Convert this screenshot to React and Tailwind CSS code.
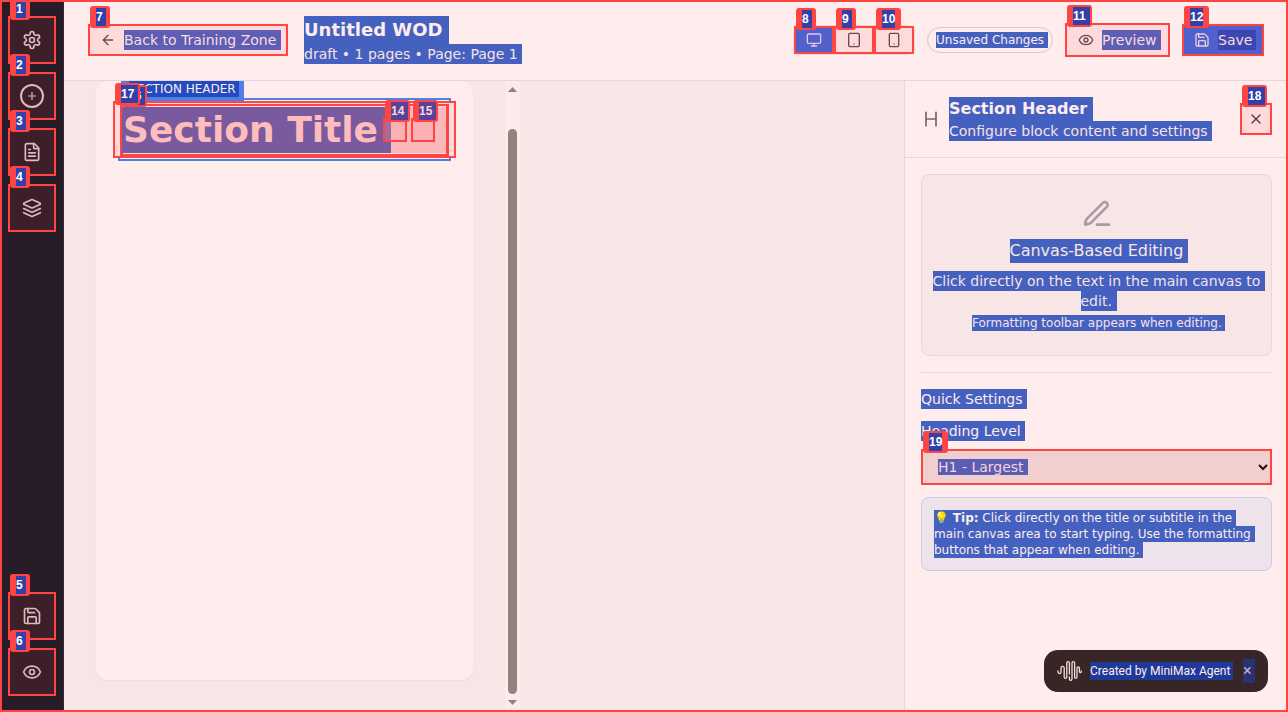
import React from "react";
import { FileText, Save, Eye, ArrowLeft, Monitor, Tablet, Smartphone, X, Heading } from "lucide-react";
import { twMerge } from "tailwind-merge";

// Text shown in its selected state
function Sel({ className = "", children }) {
  return (
    <span className={twMerge("block shrink-0 whitespace-nowrap bg-[#4461c0] text-[#ffecec]", className)}>{children}</span>
  );
}

// Numbered marker at the top left of an interactive element
function Mark({ n, wide = false, pos = "-top-5 left-0", faded = false }) {
  const two = String(n).length === 2;
  return (
    <span
      className={
        "absolute z-20 flex h-[22px] rounded-[3px] bg-[#ff4444] pt-0.5 text-left font-['Liberation_Sans',sans-serif] text-[12px] font-bold leading-[18px] " +
        (two ? "w-[25px] pl-1.5 " : "w-5 pl-1.5 ") + pos
      }
    >
      <span
        className={
          "block h-[18px] " +
          (faded ? "bg-[#59429a] text-[#ffd5d8] " : "bg-[#3340a8] text-white ") +
          (two ? (wide ? "w-[17px]" : "w-[13px]") : "w-[10px]")
        }
      >
        {n}
      </span>
    </span>
  );
}

function Stroke({ size, className = "", children }) {
  return (
    <svg width={size} height={size} viewBox="0 0 24 24" fill="none" stroke="currentColor" strokeWidth="2" strokeLinecap="round" strokeLinejoin="round" className={className}>
      {children}
    </svg>
  );
}

function GearIcon() {
  return (
    <Stroke size={20}>
      <path d="M12.22 2h-.44a2 2 0 0 0-2 2v.18a2 2 0 0 1-1 1.73l-.43.25a2 2 0 0 1-2 0l-.15-.08a2 2 0 0 0-2.73.73l-.22.38a2 2 0 0 0 .73 2.73l.15.1a2 2 0 0 1 1 1.72v.51a2 2 0 0 1-1 1.74l-.15.09a2 2 0 0 0-.73 2.73l.22.38a2 2 0 0 0 2.73.73l.15-.08a2 2 0 0 1 2 0l.43.25a2 2 0 0 1 1 1.73V20a2 2 0 0 0 2 2h.44a2 2 0 0 0 2-2v-.18a2 2 0 0 1 1-1.73l.43-.25a2 2 0 0 1 2 0l.15.08a2 2 0 0 0 2.73-.73l.22-.39a2 2 0 0 0-.73-2.73l-.15-.08a2 2 0 0 1-1-1.74v-.5a2 2 0 0 1 1-1.74l.15-.09a2 2 0 0 0 .73-2.73l-.22-.38a2 2 0 0 0-2.73-.73l-.15.08a2 2 0 0 1-2 0l-.43-.25a2 2 0 0 1-1-1.73V4a2 2 0 0 0-2-2z" />
      <circle cx="12" cy="12" r="3" />
    </Stroke>
  );
}

function LayersIcon() {
  return (
    <Stroke size={20}>
      <path d="m12.83 2.18a2 2 0 0 0-1.66 0L2.6 6.08a1 1 0 0 0 0 1.83l8.58 3.91a2 2 0 0 0 1.66 0l8.58-3.9a1 1 0 0 0 0-1.83Z" />
      <path d="m22 17.65-9.17 4.16a2 2 0 0 1-1.66 0L2 17.65" />
      <path d="m22 12.65-9.17 4.16a2 2 0 0 1-1.66 0L2 12.65" />
    </Stroke>
  );
}

function PenIcon() {
  return (
    <Stroke size={32} className="shrink-0 text-[#a99aa6]">
      <path d="M12 20h9" />
      <path d="M16.376 3.622a1 1 0 0 1 3.002 3.002L7.368 18.635a2 2 0 0 1-.855.506l-2.872.838a.5.5 0 0 1-.62-.62l.838-2.872a2 2 0 0 1 .506-.854z" />
    </Stroke>
  );
}

function Side({ n, children }) {
  return (
    <button className="relative flex h-12 w-12 items-center justify-center border-2 border-[#ff4444] bg-[#3d1f29] text-[#deb9be]">
      <Mark n={n} />
      {children}
    </button>
  );
}

function Sidebar() {
  return (
    <aside className="flex w-16 shrink-0 flex-col justify-between border-r border-[#342932] bg-[#281c28] py-4 pl-2">
      <div className="flex flex-col gap-2">
        <Side n={1}><GearIcon /></Side>
        <Side n={2}>
          <svg width="24" height="24" viewBox="0 0 24 24" fill="none" stroke="currentColor">
            <circle cx="12" cy="12" r="11" strokeWidth="2" />
            <path d="M12 8v8M8 12h8" strokeWidth="1.2" />
          </svg>
        </Side>
        <Side n={3}><FileText size={20} /></Side>
        <Side n={4}><LayersIcon /></Side>
      </div>
      <div className="flex flex-col gap-2">
        <Side n={5}><Save size={20} /></Side>
        <Side n={6}><Eye size={20} /></Side>
      </div>
    </aside>
  );
}

function Header() {
  return (
    <header className="flex h-[81px] shrink-0 items-center border-b border-[#e9d6dc] pl-6 pr-6 text-sm">
      <button className="relative flex h-8 w-[200px] items-center border-2 border-[#ff4444] bg-[#ffdada] pl-2.5 text-[#6a4650]">
        <Mark n={7} />
        <ArrowLeft size={16} />
        <Sel className="ml-2 h-5 w-[157px] bg-[#5c5fb5] text-left leading-5 text-[#ffdada]">Back to Training Zone</Sel>
      </button>
      <div className="ml-4">
        <Sel className="h-7 w-[145px] text-lg font-bold leading-7">Untitled WOD</Sel>
        <Sel className="h-5 w-[218px] leading-5 text-[#f8e0e6]">draft • 1 pages • Page: Page 1</Sel>
      </div>
      <div className="ml-auto flex items-center">
        <div className="flex rounded-md text-[#6a4650] shadow-[0_0_0_1px_#e9d6dc]">
          <button className="relative flex h-7 w-10 items-center justify-center border-2 border-[#ff4444] bg-[#5060cc] text-[#e7c4dc]">
            <Mark n={8} /><Monitor size={16} />
          </button>
          <button className="relative flex h-7 w-10 items-center justify-center border-2 border-[#ff4444] bg-[#ffdada]">
            <Mark n={9} /><Tablet size={16} />
          </button>
          <button className="relative flex h-7 w-10 items-center justify-center border-2 border-[#ff4444] bg-[#ffdada]">
            <Mark n={10} /><Smartphone size={16} />
          </button>
        </div>
        <div className="ml-[13px] flex h-[26px] w-[126px] items-center rounded-full border border-[#dcc6cc] pl-2">
          <Sel className="h-4 w-[112px] text-xs leading-4">Unsaved Changes</Sel>
        </div>
        <button className="relative ml-3 flex h-[34px] w-[105px] items-center border-2 border-[#ff4444] bg-[#ffdada] pl-[11px] text-[#6a4650]">
          <Mark n={11} wide />
          <Eye size={16} />
          <Sel className="ml-2 h-5 w-[59px] bg-[#5c5fb5] text-left leading-5 text-[#ffdada]">Preview</Sel>
        </button>
        <button className="relative ml-3 flex h-8 w-[82px] items-center border-2 border-[#ff4444] bg-[#5060cc] pl-2.5 text-[#f0cbdc]">
          <Mark n={12} />
          <Save size={16} />
          <Sel className="ml-2 h-5 w-[38px] bg-[#3a47b0] text-left leading-5 text-[#ffdada]">Save</Sel>
        </button>
      </div>
    </header>
  );
}

function Canvas() {
  return (
    <main className="flex w-[840px] shrink-0 overflow-hidden bg-[#f8e6e6] pl-8">
      <div className="h-[599px] w-[377px] shrink-0 rounded-xl bg-[#ffecec] pl-[22px] pt-[17px] shadow-[0_1px_2px_#efd9dc]">
        <div className="relative h-[63px] w-[333px] border-2 border-[#4f7ee6]">
          <div className="absolute -top-[23px] left-px h-6 w-[123px] rounded-tr bg-[#4f7ee6] pl-2 pt-1">
            <Sel className="h-4 w-[110px] bg-[#234abf] text-xs leading-4">SECTION HEADER</Sel>
          </div>
          <div className="absolute -left-[7px] top-px h-[57px] w-[343px] border-2 border-[#ff4444] bg-[#ffdada]">
            <div className="ml-[5px] mt-px h-[52px] w-[329px] border-2 border-l-[3px] border-r-[3px] border-[#ff4444] bg-[#fbb8bb]">
              <div className="h-full border-y border-[#ffdada]">
                <Sel className="-ml-px h-[46px] w-[269px] bg-[#7a5a9e] pl-px text-4xl font-bold leading-[46px] text-[#ffbcbc]">Section Title</Sel>
              </div>
            </div>
            <div className="absolute left-[268px] top-[15px] flex gap-1">
              <div className="relative h-6 w-6 border-2 border-[#ff4444] bg-[#ff9ea44d]"><Mark n={14} wide faded pos="-top-5 left-0" /></div>
              <div className="relative h-6 w-6 border-2 border-[#ff4444] bg-[#ff9ea44d]"><Mark n={15} wide faded pos="-top-5 left-0" /></div>
            </div>
            <Mark n={16} wide pos="-top-[18px] left-[7px]" />
            <Mark n={17} wide pos="-top-5 left-0" />
          </div>
        </div>
      </div>
      <div className="ml-8 flex w-[15px] flex-col items-center bg-[#fcebeb] pb-[7px] pt-1.5">
        <svg width="9" height="5" viewBox="0 0 9 5" fill="#948281"><path d="M0 5L4.5 0L9 5z" /></svg>
        <div className="my-auto h-[565px] w-[9px] translate-y-[15px] rounded-full bg-[#948281]" />
        <svg width="9" height="5" viewBox="0 0 9 5" fill="#948281"><path d="M0 0L4.5 5L9 0z" /></svg>
      </div>
    </main>
  );
}

function Panel() {
  return (
    <section className="flex-1 border-l border-[#e9d6dc] text-sm">
      <div className="flex h-[77px] items-center border-b border-[#e9d6dc] pl-4 pr-4">
        <Heading size={20} strokeWidth={2} className="text-[#76656c]" />
        <div className="ml-2">
          <Sel className="h-6 w-[144px] text-base font-bold leading-6">Section Header</Sel>
          <Sel className="h-5 w-[263px] leading-5 text-[#f8e0e6]">Configure block content and settings</Sel>
        </div>
        <button className="relative ml-auto flex h-8 w-8 items-center justify-center border-2 border-[#ff4444] bg-[#ffdada] text-[#5e3c48]">
          <Mark n={18} wide />
          <X size={16} />
        </button>
      </div>
      <div className="px-4 pt-4">
        <div className="flex h-[182px] flex-col items-center rounded-lg border border-[#e9d6dc] bg-[#f8e6e6] pt-[23px]">
          <PenIcon />
          <Sel className="ml-1 mt-[9px] h-6 w-[178px] text-base leading-6 text-[#f8e6e6]">Canvas-Based Editing</Sel>
          <Sel className="ml-1 mt-2 h-5 w-[332px] leading-5 text-[#f8e0e6]">Click directly on the text in the main canvas to</Sel>
          <Sel className="ml-1 h-5 w-9 leading-5 text-[#f8e0e6]">edit.</Sel>
          <Sel className="ml-1 mt-1 h-4 w-[253px] text-xs leading-4 text-[#f8e0e6]">Formatting toolbar appears when editing.</Sel>
        </div>
        <div className="mt-4 border-t border-[#e9d6dc] pt-4">
          <Sel className="h-5 w-[106px] leading-5">Quick Settings</Sel>
          <Sel className="mt-3 h-5 w-[104px] leading-5">Heading Level</Sel>
          <div className="relative mt-2 flex h-9 items-center border-2 border-[#ff4444] bg-[#f2cfcf] pl-[15px] pr-px">
            <Mark n={19} />
            <Sel className="h-4 w-[90px] bg-[#5a5db4] leading-4 text-[#f6d2dc]">H1 - Largest</Sel>
            <svg className="ml-auto" width="12" height="8" viewBox="0 0 12 8" fill="none" stroke="#2b0b0f" strokeWidth="2"><path d="M2 2L6 6L10 2" /></svg>
          </div>
          <div className="mt-3 h-[74px] rounded-lg border border-[#c9cbe9] bg-[#eee3eb] pl-3 pt-3 text-xs">
            <Sel className="h-4 w-[302px] leading-4">💡 <b>Tip:</b> Click directly on the title or subtitle in the</Sel>
            <Sel className="h-4 w-[321px] leading-4">main canvas area to start typing. Use the formatting</Sel>
            <Sel className="h-4 w-[209px] leading-4">buttons that appear when editing.</Sel>
          </div>
        </div>
      </div>
    </section>
  );
}

function AgentChip() {
  return (
    <div className="absolute bottom-5 right-5 flex h-[42px] w-56 items-center rounded-[14px] bg-[#382525] pl-[13px] font-['Roboto',sans-serif] text-xs">
      <svg width="25" height="22" viewBox="0 0 25 22" fill="none" stroke="#f5dddd" strokeWidth="1.3" strokeLinecap="round">
        <path d="M1 11v1a1.5 1.5 0 0 0 3 0V8a1.6 1.6 0 0 1 3.2 0v9a1.3 1.3 0 0 0 2.6 0V3a1.3 1.3 0 0 1 2.6 0v11" />
        <path d="M12.4 17v2a1.3 1.3 0 0 0 2.6 0V3a1.3 1.3 0 0 1 2.6 0v14a1.2 1.2 0 0 0 2.4 0V8a1.2 1.2 0 0 1 2.4 0v4a1 1 0 0 0 1.8 0v-1" />
      </svg>
      <Sel className="ml-2 h-[18px] w-[143px] bg-[#1f3998] leading-[18px]">Created by MiniMax Agent</Sel>
      <Sel className="ml-2.5 h-6 w-3 bg-[#2a3276] text-base leading-6 text-[#c0b6c8]">×</Sel>
    </div>
  );
}

export default function App() {
  return (
    <div className="relative flex h-[712px] w-[1288px] overflow-hidden bg-[#ffecec] font-['DejaVu_Sans',sans-serif]">
      <Sidebar />
      <div className="flex min-w-0 flex-1 flex-col">
        <Header />
        <div className="flex min-h-0 flex-1">
          <Canvas />
          <Panel />
        </div>
      </div>
      <AgentChip />
      <div className="pointer-events-none absolute inset-0 z-30 border-2 border-[#ff4444]" />
    </div>
  );
}
